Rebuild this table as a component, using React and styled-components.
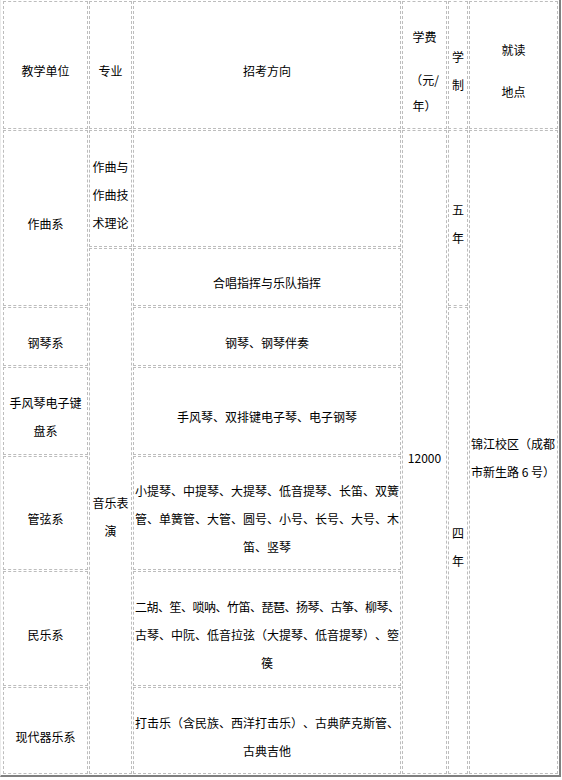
import React from 'react';
import styled, { createGlobalStyle } from 'styled-components';

const GlobalStyle = createGlobalStyle`
  html, body {
    margin: 0;
    padding: 0;
    background: #fff;
  }
  body {
    font-family: "Noto Sans CJK SC", "Liberation Sans", sans-serif;
    font-size: 12px;
    color: #000;
  }
`;

const Table = styled.table`
  box-sizing: border-box;
  width: 561px;
  table-layout: fixed;
  border-collapse: separate;
  border-spacing: 1px;
  padding: 0 0 0 1px;
  border-style: solid;
  border-width: 0 2px 2px 1px;
  border-color: #ececec #808080 #808080 #ececec;
  font-size: 12px;
  text-spacing-trim: space-all;
`;

const Col = styled.col`
  width: ${p => p.$w}px;
`;

const Row = styled.tr`
  height: ${p => p.$h}px;
`;

const Cell = styled.td`
  border: 1px dashed #bdbdbd;
  padding: 12px 1px 0;
  vertical-align: middle;
  text-align: ${p => p.$align || 'center'};
  line-height: ${p => p.$lh || 28}px;
  white-space: nowrap;
  overflow: visible;
`;

const Line = styled.div`
  line-height: ${p => p.$lh || 28}px;
  margin-bottom: ${p => p.$gap || 0}px;
  letter-spacing: ${p => p.$tight ? '-0.5px' : 'normal'};
`;

const App = () => (
  <>
    <GlobalStyle />
    <Table>
      <colgroup>
        <Col $w={85} />
        <Col $w={43} />
        <Col $w={268} />
        <Col $w={45} />
        <Col $w={20} />
        <Col $w={89} />
      </colgroup>
      <tbody>
        <Row $h={128}>
          <Cell>教学单位</Cell>
          <Cell>专业</Cell>
          <Cell>招考方向</Cell>
          <Cell>
            <Line $gap={16}>学费</Line>
            <Line $lh={26}>（元/</Line>
            <Line $lh={26}>年）</Line>
          </Cell>
          <Cell>
            <Line>学</Line>
            <Line>制</Line>
          </Cell>
          <Cell>
            <Line $gap={14}>就读</Line>
            <Line>地点</Line>
          </Cell>
        </Row>

        <Row $h={117}>
          <Cell rowSpan={2}>作曲系</Cell>
          <Cell>
            <Line>作曲与</Line>
            <Line>作曲技</Line>
            <Line>术理论</Line>
          </Cell>
          <Cell />
          <Cell rowSpan={7}>12000</Cell>
          <Cell rowSpan={2}>
            <Line>五</Line>
            <Line>年</Line>
          </Cell>
          <Cell rowSpan={7} $align="left">
            <Line>锦江校区（成都</Line>
            <Line>市新生路 6 号）</Line>
          </Cell>
        </Row>

        <Row $h={58}>
          <Cell rowSpan={6}>
            <Line>音乐表</Line>
            <Line>演</Line>
          </Cell>
          <Cell>合唱指挥与乐队指挥</Cell>
        </Row>

        <Row $h={59}>
          <Cell>钢琴系</Cell>
          <Cell>钢琴、钢琴伴奏</Cell>
          <Cell rowSpan={5}>
            <Line>四</Line>
            <Line>年</Line>
          </Cell>
        </Row>

        <Row $h={88}>
          <Cell>
            <Line>手风琴电子键</Line>
            <Line>盘系</Line>
          </Cell>
          <Cell>手风琴、双排键电子琴、电子钢琴</Cell>
        </Row>

        <Row $h={114}>
          <Cell>管弦系</Cell>
          <Cell>
            <Line>小提琴、中提琴、大提琴、低音提琴、长笛、双簧</Line>
            <Line>管、单簧管、大管、圆号、小号、长号、大号、木</Line>
            <Line>笛、竖琴</Line>
          </Cell>
        </Row>

        <Row $h={115}>
          <Cell>民乐系</Cell>
          <Cell>
            <Line $tight>二胡、笙、唢呐、竹笛、琵琶、扬琴、古筝、柳琴、</Line>
            <Line>古琴、中阮、低音拉弦（大提琴、低音提琴）、箜</Line>
            <Line>篌</Line>
          </Cell>
        </Row>

        <Row $h={87}>
          <Cell>现代器乐系</Cell>
          <Cell>
            <Line>打击乐（含民族、西洋打击乐）、古典萨克斯管、</Line>
            <Line>古典吉他</Line>
          </Cell>
        </Row>
      </tbody>
    </Table>
  </>
);

export default App;
